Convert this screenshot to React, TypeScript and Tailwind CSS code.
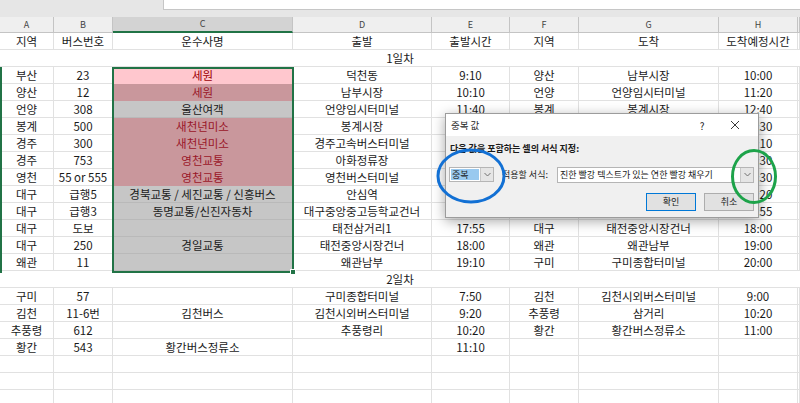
import React from 'react';

type Fill = 'active' | 'pink' | 'gray' | undefined;
type Row = { cells: string[]; fill?: Fill } | { merged: string };

const LETTERS = ['A', 'B', 'C', 'D', 'E', 'F', 'G', 'H', ''];

const ROWS: Row[] = [
  { cells: ['지역', '버스번호', '운수사명', '출발', '출발시간', '지역', '도착', '도착예정시간', ''] },
  { merged: '1일차' },
  { cells: ['부산', '23', '세원', '덕천동', '9:10', '양산', '남부시장', '10:00', ''], fill: 'active' },
  { cells: ['양산', '12', '세원', '남부시장', '10:10', '언양', '언양임시터미널', '11:20', ''], fill: 'pink' },
  { cells: ['언양', '308', '울산여객', '언양임시터미널', '11:40', '봉계', '봉계시장', '12:40', ''], fill: 'gray' },
  { cells: ['봉계', '500', '새천년미소', '봉계시장', '12:50', '경주', '경주고속버스터미널', '13:30', ''], fill: 'pink' },
  { cells: ['경주', '300', '새천년미소', '경주고속버스터미널', '13:40', '경주', '아화정류장', '14:10', ''], fill: 'pink' },
  { cells: ['경주', '753', '영천교통', '아화정류장', '14:20', '영천', '영천버스터미널', '15:30', ''], fill: 'pink' },
  { cells: ['영천', '55 or 555', '영천교통', '영천버스터미널', '15:40', '대구', '안심역', '16:30', ''], fill: 'pink' },
  { cells: ['대구', '급행5', '경북교통 / 세진교통 / 신흥버스', '안심역', '16:40', '대구', '대구중앙중고등학교건너', '17:20', ''], fill: 'gray' },
  { cells: ['대구', '급행3', '동명교통/신진자동차', '대구중앙중고등학교건너', '17:30', '대구', '태전삼거리1', '17:55', ''], fill: 'gray' },
  { cells: ['대구', '도보', '', '태전삼거리1', '17:55', '대구', '태전중앙시장건너', '18:00', ''], fill: 'gray' },
  { cells: ['대구', '250', '경일교통', '태전중앙시장건너', '18:00', '왜관', '왜관남부', '19:00', ''], fill: 'gray' },
  { cells: ['왜관', '11', '', '왜관남부', '19:10', '구미', '구미종합터미널', '20:00', ''], fill: 'gray' },
  { merged: '2일차' },
  { cells: ['구미', '57', '', '구미종합터미널', '7:50', '김천', '김천시외버스터미널', '9:00', ''] },
  { cells: ['김천', '11-6번', '김천버스', '김천시외버스터미널', '9:20', '추풍령', '삼거리', '10:20', ''] },
  { cells: ['추풍령', '612', '', '추풍령리', '10:20', '황간', '황간버스정류소', '11:00', ''] },
  { cells: ['황간', '543', '황간버스정류소', '', '11:10', '', '', '', ''] },
  { cells: ['', '', '', '', '', '', '', '', ''] },
  { cells: ['', '', '', '', '', '', '', '', ''] },
  { cells: ['', '', '', '', '', '', '', '', ''] },
];

const GRID = 'grid grid-cols-[54px_59px_180px_139px_78px_69px_140px_79px_1fr]';

function cellClass(col: number, fill: Fill) {
  const base = 'h-[17px] border-r border-b text-center leading-[16px] whitespace-nowrap overflow-hidden';
  if (col === 2 && fill === 'active') return `${base} bg-[#ffc7ce] text-[#9c0006] border-[#ffc7ce]`;
  if (col === 2 && fill === 'pink') return `${base} bg-[#c9979c] text-[#9a1628] border-[#c9979c]`;
  if (col === 2 && fill === 'gray') return `${base} bg-[#c6c6c6] border-r-[#c6c6c6] border-b-[#b9b9b9]`;
  return `${base} border-[#e1e1e1]`;
}

function Chevron() {
  return (
    <svg width="7" height="5" viewBox="0 0 7 5">
      <path d="M0.5 1 L3.5 4 L6.5 1" fill="none" stroke="#707070" strokeWidth="1" />
    </svg>
  );
}

function Dialog() {
  return (
    <div className="absolute left-[445px] top-[113px] w-[314px] h-[105px] bg-[#f0f0f0] border border-[#9c9c9c] shadow-[0_3px_12px_rgba(0,0,0,0.35)] flex flex-col text-[9px] text-[#1a1a1a]">
      <div className="h-[22px] bg-white flex items-center pl-[5px]">
        <span className="text-[9.5px]">중복 값</span>
        <span className="ml-auto w-[20px] text-center text-[10px]">?</span>
        <span className="w-[46px] flex justify-center">
          <svg width="10" height="10" viewBox="0 0 10 10">
            <path d="M1 1 L9 9 M9 1 L1 9" stroke="#222" strokeWidth="0.9" />
          </svg>
        </span>
      </div>
      <div className="flex-1 flex flex-col px-[3px] pt-[7px]">
        <div className="font-bold h-[12px] leading-[12px] pl-[1px]">다음 값을 포함하는 셀의 서식 지정:</div>
        <div className="mt-[11px] flex items-center h-[17px]">
          <div className="w-[45px] h-[15px] bg-white border border-[#b5b5b5] flex">
            <div className="m-[1px] flex-1 bg-[#99c9ef] leading-[11px] pl-[1px]">중복</div>
            <div className="w-[13px] bg-[#e5e5e5] border-l border-[#c8c8c8] flex items-center justify-center">
              <Chevron />
            </div>
          </div>
          <span className="ml-[8px]">적용할 서식:</span>
          <div className="ml-auto mr-[1px] w-[197px] h-[16px] bg-white border border-[#b5b5b5] flex">
            <span className="flex-1 pl-[2px] leading-[14px] whitespace-nowrap overflow-hidden">진한 빨강 텍스트가 있는 연한 빨강 채우기</span>
            <div className="w-[13px] bg-[#e5e5e5] border-l border-[#c8c8c8] flex items-center justify-center">
              <Chevron />
            </div>
          </div>
        </div>
        <div className="mt-[10px] flex justify-end gap-[8px] pr-[1px]">
          <div className="w-[50px] h-[18px] bg-[#e1e1e1] border border-[#0078d7] flex items-center justify-center">확인</div>
          <div className="w-[50px] h-[18px] bg-[#e1e1e1] border border-[#adadad] flex items-center justify-center">취소</div>
        </div>
      </div>
    </div>
  );
}

export default function App() {
  return (
    <div className="relative w-[800px] h-[403px] overflow-hidden bg-white text-[11.5px] text-[#1a1a1a] font-['Noto_Sans_CJK_KR','Noto_Sans',sans-serif]">
      {/* formula bar strip */}
      <div className="h-[17px] bg-[#e6e6e6] flex flex-col">
        <div className="h-[10px] flex">
          <div className="w-[163px]" />
          <div className="flex-1 bg-white border-l border-b border-[#c6c6c6]" />
        </div>
      </div>

      {/* column letters */}
      <div className={`${GRID} h-[16px] bg-[#efefef] text-[9px] text-[#444]`}>
        {LETTERS.map((l, i) => (
          <div
            key={i}
            className={
              i === 2
                ? 'border-r border-[#c4c4c4] border-b-2 border-b-[#217346] bg-[#d3d3d3] flex items-center justify-center'
                : 'border-r border-b border-[#c4c4c4] flex items-center justify-center'
            }
          >
            {l}
          </div>
        ))}
      </div>

      {/* cells */}
      {ROWS.map((row, r) =>
        'merged' in row ? (
          <div key={r} className="h-[17px] border-b border-[#e1e1e1] text-center leading-[16px]">
            {row.merged}
          </div>
        ) : (
          <div key={r} className={GRID}>
            {row.cells.map((c, i) => (
              <div key={i} className={cellClass(i, row.fill)}>
                {c}
              </div>
            ))}
          </div>
        )
      )}

      {/* selection overlay */}
      <div className="absolute left-[0px] top-[67px] w-[2px] h-[206px] bg-[#217346]" />
      <div className="absolute left-[112px] top-[67px] w-[182px] h-[206px] border-2 border-[#217346] pointer-events-none" />
      <div className="absolute left-[290px] top-[269px] w-[6px] h-[6px] bg-[#217346] border border-white" />

      <Dialog />

      {/* hand-drawn annotations */}
      <svg className="absolute left-0 top-0 pointer-events-none" width="800" height="403">
        <ellipse cx="471" cy="176" rx="33" ry="26" fill="none" stroke="#1270d4" strokeWidth="3" />
        <ellipse cx="754" cy="176.5" rx="21.5" ry="26" fill="none" stroke="#1da34a" strokeWidth="3" />
      </svg>
    </div>
  );
}
